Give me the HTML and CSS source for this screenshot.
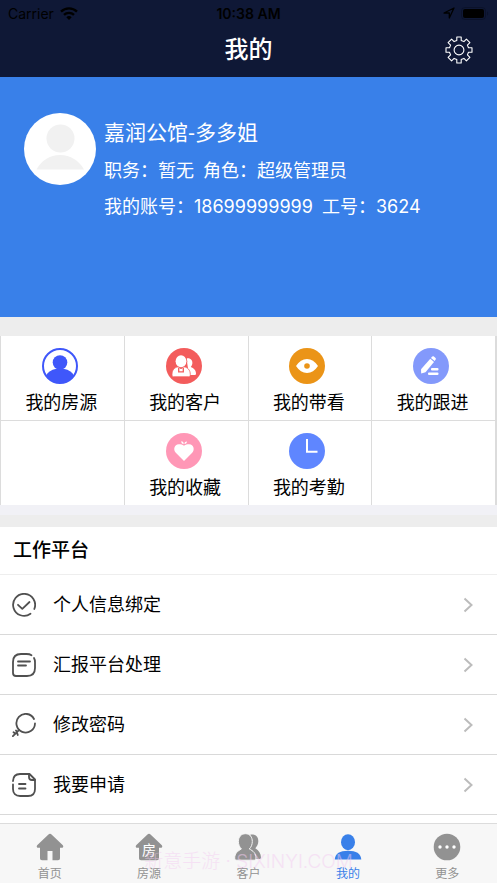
FILE: index.html
```html
<!DOCTYPE html>
<html lang="zh-CN">
<head>
<meta charset="utf-8">
<meta name="viewport" content="width=device-width, initial-scale=1">
<title>我的</title>
<link rel="stylesheet" href="styles.css">
</head>
<body>
<div class="app">
  <header class="topbar">
    <div class="status">
      <div class="status-left">
        <span>Carrier</span>
        <svg width="18" height="13" viewBox="0 0 18 13" fill="none" stroke="#000" stroke-width="2.4" aria-hidden="true"><path d="M1 4.600a11.500 11.500 0 0 1 16 0"/><path d="M4 7.900a7.200 7.200 0 0 1 10 0"/><path d="M9 13 6.300 10.200a4 4 0 0 1 5.400 0z" fill="#000" stroke="none"/></svg>
      </div>
      <span class="clock">10:38 AM</span>
      <div class="status-right">
        <svg width="12" height="12" viewBox="0 0 12 12" fill="none" stroke="#000" stroke-width="1.300" stroke-linejoin="round" aria-hidden="true"><path d="M1 6 11 1 6.300 11V6z"/></svg>
        <svg width="28" height="13" viewBox="0 0 28 13" aria-hidden="true"><rect x=".5" y=".5" width="24" height="12" rx="3.500" fill="none" stroke="#0b122a"/><rect x="2" y="2" width="21" height="9" rx="2" fill="#000"/><path d="M26 4.500c1.600.8 1.600 3.200 0 4z" fill="#0b122a"/></svg>
      </div>
    </div>
    <div class="titlebar">
      <h1>我的</h1>
      <button class="settings" type="button" aria-label="设置">
        <svg width="28" height="28" viewBox="0 0 28 28" fill="none" stroke="#fff" stroke-width="1.100" stroke-linejoin="round"><path d="M11.800 1h4.400v3.500l2.700 1.100 2.500-2.500 3.500 3.500-2.500 2.500 1.100 2.700H27v4.400h-3.500l-1.100 2.700 2.500 2.500-3.500 3.500-2.500-2.500-2.700 1.100V27h-4.400v-3.500l-2.700-1.100-2.500 2.500-3.500-3.500 2.500-2.500-1.100-2.700H1v-4.400h3.500l1.100-2.700-2.500-2.500 3.500-3.500 2.500 2.500 2.700-1.100z"/><circle cx="14" cy="14" r="4.900"/></svg>
      </button>
    </div>
  </header>

  <main>
    <section class="profile">
      <svg class="avatar" width="72" height="72" viewBox="0 0 72 72" aria-hidden="true"><circle cx="36" cy="36" r="36" fill="#fff"/><circle cx="36.500" cy="25.500" r="14" fill="#f1f1f1"/><path d="M12.500 56.500c5-9 13-14.500 23.500-14.500s19 5.500 24 14.500z" fill="#f1f1f1"/></svg>
      <div class="profile-text">
        <p class="name">嘉润公馆-多多姐</p>
        <p class="detail"><span>职务：暂无</span><span>角色：超级管理员</span></p>
        <p class="detail"><span>我的账号：18699999999</span><span>工号：3624</span></p>
      </div>
    </section>

    <nav class="tiles" aria-label="功能">
      <a class="tile" href="#houses">
        <svg width="36" height="36" viewBox="0 0 36 36" aria-hidden="true"><circle cx="18" cy="18" r="17" fill="#fff" stroke="#3f57fa" stroke-width="2"/><circle cx="18" cy="14.500" r="7.300" fill="#3f57fa"/><path d="M4 27.500c2-3.800 5.500-5.600 9.500-6.500h9c4 .9 7.500 2.700 9.500 6.500A17.500 17.500 0 0 1 4 27.500z" fill="#3f57fa"/></svg>
        <span>我的房源</span>
      </a>
      <a class="tile" href="#clients">
        <svg width="36" height="36" viewBox="0 0 36 36" aria-hidden="true"><circle cx="18" cy="18" r="18" fill="#f35c5c"/><path d="M20.500 10.500c4-.8 6.500 2 5.800 5.500-.2 1.200-.8 2-1.500 2.900 3 1.200 5.200 3.100 5.200 6.600 0 1-.6 1.500-1.500 1.500H23z" fill="#fff"/><ellipse cx="15" cy="13.200" rx="6.300" ry="7.200" fill="#f35c5c"/><path d="M6 26.500c0-4.500 2.500-7 6-7.700l3 2 3-2c3.800.7 6.300 3.200 6.300 7.700 0 1.600-.5 2.300-1.600 2.300H7.600C6.500 28.800 6 28.100 6 26.500z" fill="#fff" stroke="#f35c5c" stroke-width=".8"/><ellipse cx="15" cy="13.200" rx="5.400" ry="6" fill="#fff"/><path d="M12.700 20v3.800h4.600V20" fill="none" stroke="#f35c5c" stroke-width="1.300"/></svg>
        <span>我的客户</span>
      </a>
      <a class="tile" href="#viewings">
        <svg width="36" height="36" viewBox="0 0 36 36" aria-hidden="true"><circle cx="18" cy="18" r="18" fill="#eb9417"/><path d="M7 18c3-4.500 6.700-7 11-7s8 2.500 11 7c-3 4.500-6.700 7-11 7s-8-2.500-11-7z" fill="#fff"/><circle cx="18" cy="18" r="2.800" fill="#eb9417"/></svg>
        <span>我的带看</span>
      </a>
      <a class="tile" href="#follow">
        <svg width="36" height="36" viewBox="0 0 36 36" fill="#fff" aria-hidden="true"><circle cx="18" cy="18" r="18" fill="#8399fb"/><path d="m17.300 10.800 3.700 3.100-8.500 10.300-4.300 1.400-.2-4.400z"/><path d="m18 9.900.9-1.200c.6-.7 1.300-.7 2-.2l1.400 1.200c.7.600.8 1.300.2 2l-.8 1.200z"/><rect x="18" y="20" width="7.500" height="2.500" rx="1"/><rect x="15" y="24.500" width="10.500" height="2.500" rx="1"/></svg>
        <span>我的跟进</span>
      </a>
      <div class="tile"></div>
      <a class="tile" href="#favorites">
        <svg width="36" height="36" viewBox="0 0 36 36" fill="#fff" aria-hidden="true"><circle cx="18" cy="18" r="18" fill="#ff97b6"/><path d="M18 28 9.800 19.800c-2.800-3-1.600-8.500 3-8.500 2.200 0 3.700.5 5.200 1.400 1.500-.9 3-1.400 5.200-1.400 4.600 0 5.800 5.500 3 8.500z"/><path d="M17.700 11.200c-1.700-.4-2.500-1.500-2.500-3 1.700.1 2.600 1.100 2.500 3zM18.500 11c-.2-1.500.8-2.500 2.400-2.600 0 1.500-.8 2.500-2.400 2.600z"/></svg>
        <span>我的收藏</span>
      </a>
      <a class="tile" href="#attendance">
        <svg width="36" height="36" viewBox="0 0 36 36" aria-hidden="true"><circle cx="18" cy="18" r="18" fill="#5f86ff"/><path d="M18 6v12.800h10.500" fill="none" stroke="#fff" stroke-width="2"/></svg>
        <span>我的考勤</span>
      </a>
      <div class="tile"></div>
    </nav>

    <section class="platform">
      <h2>工作平台</h2>
      <ul>
        <li><a class="row" href="#bind">
          <svg width="24" height="24" viewBox="0 0 24 24" class="line-icon" aria-hidden="true"><path d="M18.500 20.800A11 11 0 1 1 22.300 16"/><path d="m6 11.800 4.300 4L17.500 9"/></svg>
          <span>个人信息绑定</span>
          <svg class="chevron" width="10" height="16" viewBox="0 0 10 16" aria-hidden="true"><path d="m1.500 1.500 7 6.500-7 6.500"/></svg></a></li>
        <li><a class="row" href="#report">
          <svg width="24" height="24" viewBox="0 0 24 24" class="line-icon" aria-hidden="true"><path d="M19.500 2.200C18 1.200 16.500 1 14.500 1H9C4 1 1 4 1 9v11c0 2 1 3 3 3h11c5 0 8-3 8-8V9c0-1.500-.3-2.800-1-4"/><path d="M6 8.500h12M6 12.500h8"/></svg>
          <span>汇报平台处理</span>
          <svg class="chevron" width="10" height="16" viewBox="0 0 10 16" aria-hidden="true"><path d="m1.500 1.500 7 6.500-7 6.500"/></svg></a></li>
        <li><a class="row" href="#password">
          <svg width="24" height="24" viewBox="0 0 24 24" class="line-icon" aria-hidden="true"><path d="M22 6A9.300 9.300 0 1 0 23 10.500"/><path d="M7.200 16.800.9 23.200M4 17.500l1 1.500M1.500 19.300l2 1.500M5.200 20.200l.6 1.800"/></svg>
          <span>修改密码</span>
          <svg class="chevron" width="10" height="16" viewBox="0 0 10 16" aria-hidden="true"><path d="m1.500 1.500 7 6.500-7 6.500"/></svg></a></li>
        <li><a class="row" href="#apply">
          <svg width="24" height="24" viewBox="0 0 24 24" class="line-icon" aria-hidden="true"><path d="M1 8c.2-4.500 3-7 7-7h9.500L23 6.500V16c0 4.500-2.500 7-7 7H8c-4.500 0-7-2.500-7-7v-4.500"/><path d="M17 1.200V4c0 2 1 3 3 3h2.800M7 11h6.500M7 15.500h6.500"/></svg>
          <span>我要申请</span>
          <svg class="chevron" width="10" height="16" viewBox="0 0 10 16" aria-hidden="true"><path d="m1.500 1.500 7 6.500-7 6.500"/></svg></a></li>
      </ul>
    </section>
  </main>

  <nav class="tabbar" aria-label="主导航">
    <a class="tab" href="#home">
      <svg width="28" height="28" viewBox="0 0 28 28" fill="currentColor" aria-hidden="true"><path d="M12.200 1.700a2.600 2.600 0 0 1 3.600 0L26.600 12c1.200 1.200.7 2.700-.9 2.700H24V25c0 1.500-.7 2.200-2.200 2.200H16.500V18h-5v9.200H6.200C4.700 27.200 4 26.500 4 25V14.700H2.300c-1.600 0-2.100-1.500-.9-2.700z"/></svg>
      <span>首页</span>
    </a>
    <a class="tab" href="#listing">
      <svg width="28" height="28" viewBox="0 0 28 28" fill="currentColor" aria-hidden="true"><path d="M12.200 1.700a2.600 2.600 0 0 1 3.600 0L26.600 12c1.200 1.200.7 2.700-.9 2.700H24V25c0 1.500-.7 2.200-2.200 2.200H6.200C4.700 27.200 4 26.500 4 25V14.700H2.300c-1.600 0-2.100-1.500-.9-2.700z"/><text class="icon-glyph" x="14" y="22" text-anchor="middle">房</text></svg>
      <span>房源</span>
    </a>
    <a class="tab" href="#customers">
      <svg width="28" height="28" viewBox="0 0 28 28" fill="currentColor" aria-hidden="true"><path d="M16.500 1.500c5.500-.6 8 2.400 7.800 7-.1 2.700-1.300 5-3 6.800 3.500 2.200 5.700 5.200 5.700 9.200 0 1-.6 1.500-1.500 1.500H14z"/><path d="M11.500.7C7 .7 4.400 4.200 4.400 8.500c0 3 1.200 5.700 3 7.500C3.800 17.800.7 20.500.7 25c0 1.500.5 2.200 2 2.200h17.300c1.500 0 2-.7 2-2.200 0-4.500-2.800-7.200-6.700-9 1.900-1.800 3-4.500 3-7.500C18.300 4.200 16 .7 11.500.7z" stroke="#f7f7f7" stroke-width="1"/></svg>
      <span>客户</span>
    </a>
    <a class="tab active" href="#me" aria-current="page">
      <svg width="28" height="28" viewBox="0 0 28 28" fill="currentColor" aria-hidden="true"><ellipse cx="14" cy="9.200" rx="7" ry="8"/><path d="M.7 26.500c.7-6 5-8.700 13.300-8.700s12.600 2.700 13.300 8.700z"/></svg>
      <span>我的</span>
    </a>
    <a class="tab" href="#more">
      <svg width="28" height="28" viewBox="0 0 28 28" aria-hidden="true"><circle cx="14" cy="14" r="13.300" fill="currentColor"/><g fill="#fff"><circle cx="7" cy="14" r="1.700"/><circle cx="14" cy="14" r="1.700"/><circle cx="21" cy="14" r="1.700"/></g></svg>
      <span>更多</span>
    </a>
    <span class="watermark">新意手游 · SIXINYI.COM</span>
  </nav>
</div>
</body>
</html>
```

FILE: styles.css
```css
* { box-sizing: border-box; }

body {
  margin: 0;
  background: #fff;
  color: #000;
  font-family: Inter, "Noto Sans CJK SC", sans-serif;
  font-size: 18px;
}

a { color: inherit; text-decoration: none; }
h1, h2, p, ul { margin: 0; padding: 0; }
ul { list-style: none; }
svg { display: block; flex: none; }

.app {
  display: flex;
  flex-direction: column;
  min-height: 100vh;
}

.topbar {
  background: #0f1836;
  padding-bottom: 3px;
}

.status {
  display: grid;
  grid-template-columns: 1fr auto 1fr;
  align-items: center;
  height: 26px;
  padding: 0 8px;
  color: #000;
  font-size: 14px;
}

.status-left, .status-right {
  display: flex;
  align-items: center;
  gap: 6px;
}

.status-right { justify-content: flex-end; }
.clock { font-weight: 600; }

.titlebar {
  display: grid;
  grid-template-columns: 1fr auto 1fr;
  align-items: center;
  height: 48px;
  padding: 0 24px;
}

.titlebar h1 {
  grid-column: 2;
  color: #fff;
  font-size: 24px;
  line-height: 32px;
  font-weight: 500;
}

.settings {
  justify-self: end;
  padding: 0;
  border: 0;
  background: none;
}

.profile {
  display: flex;
  gap: 8px;
  min-height: 240px;
  padding: 36px 24px;
  background: #3980e9;
  color: #fff;
}

.name {
  font-family: "Liberation Sans", "Noto Sans CJK SC", sans-serif;
  font-size: 21px;
  line-height: 40px;
}

.detail {
  display: flex;
  gap: 9px;
  line-height: 36px;
}

.tiles {
  display: grid;
  grid-template-columns: repeat(4, 1fr);
  grid-auto-rows: 84px;
  gap: 1px;
  padding: 0 2px 0 1px;
  border-top: 19px solid #ededed;
  background: #dcdcdc;
}

.tile {
  display: flex;
  flex-direction: column;
  align-items: center;
  gap: 4px;
  padding: 12px 2px 0 0;
  background: #fff;
  line-height: 30px;
}

.tile svg { margin-right: 3px; }

.platform {
  margin-top: 10px;
  border-top: 12px solid #ededed;
  box-shadow: 0 -10px #f1f1f6;
}

.platform h2 {
  padding: 0 13px;
  border-bottom: 1px solid #eee;
  font-size: 19px;
  font-weight: 500;
  line-height: 47px;
}

.row {
  display: flex;
  align-items: center;
  gap: 17px;
  height: 60px;
  padding: 0 24px 0 12px;
  border-bottom: 1px solid #d9d9d9;
  line-height: 24px;
}

.line-icon {
  fill: none;
  stroke: #505050;
  stroke-width: 1.8;
  stroke-linecap: round;
  stroke-linejoin: round;
}

.chevron {
  margin-left: auto;
  fill: none;
  stroke: #bcbcbc;
  stroke-width: 2;
}

.tabbar {
  position: sticky;
  bottom: 0;
  display: grid;
  grid-template-columns: repeat(5, 1fr);
  height: 60px;
  margin-top: auto;
  border-top: 1px solid #dcdcdc;
  background: #f7f7f7;
  color: #929292;
}

.tab {
  display: flex;
  flex-direction: column;
  align-items: center;
  gap: 4px;
  padding-top: 9px;
  font-size: 12px;
  line-height: 18px;
}

.tab.active { color: #3980e9; }
.icon-glyph { fill: #fff; font-size: 14px; }

.watermark {
  position: absolute;
  right: 0;
  bottom: 6px;
  left: 0;
  color: #f5cdf2;
  font-size: 19px;
  font-weight: 300;
  line-height: 30px;
  text-align: center;
  opacity: 0.5;
  pointer-events: none;
}
```
